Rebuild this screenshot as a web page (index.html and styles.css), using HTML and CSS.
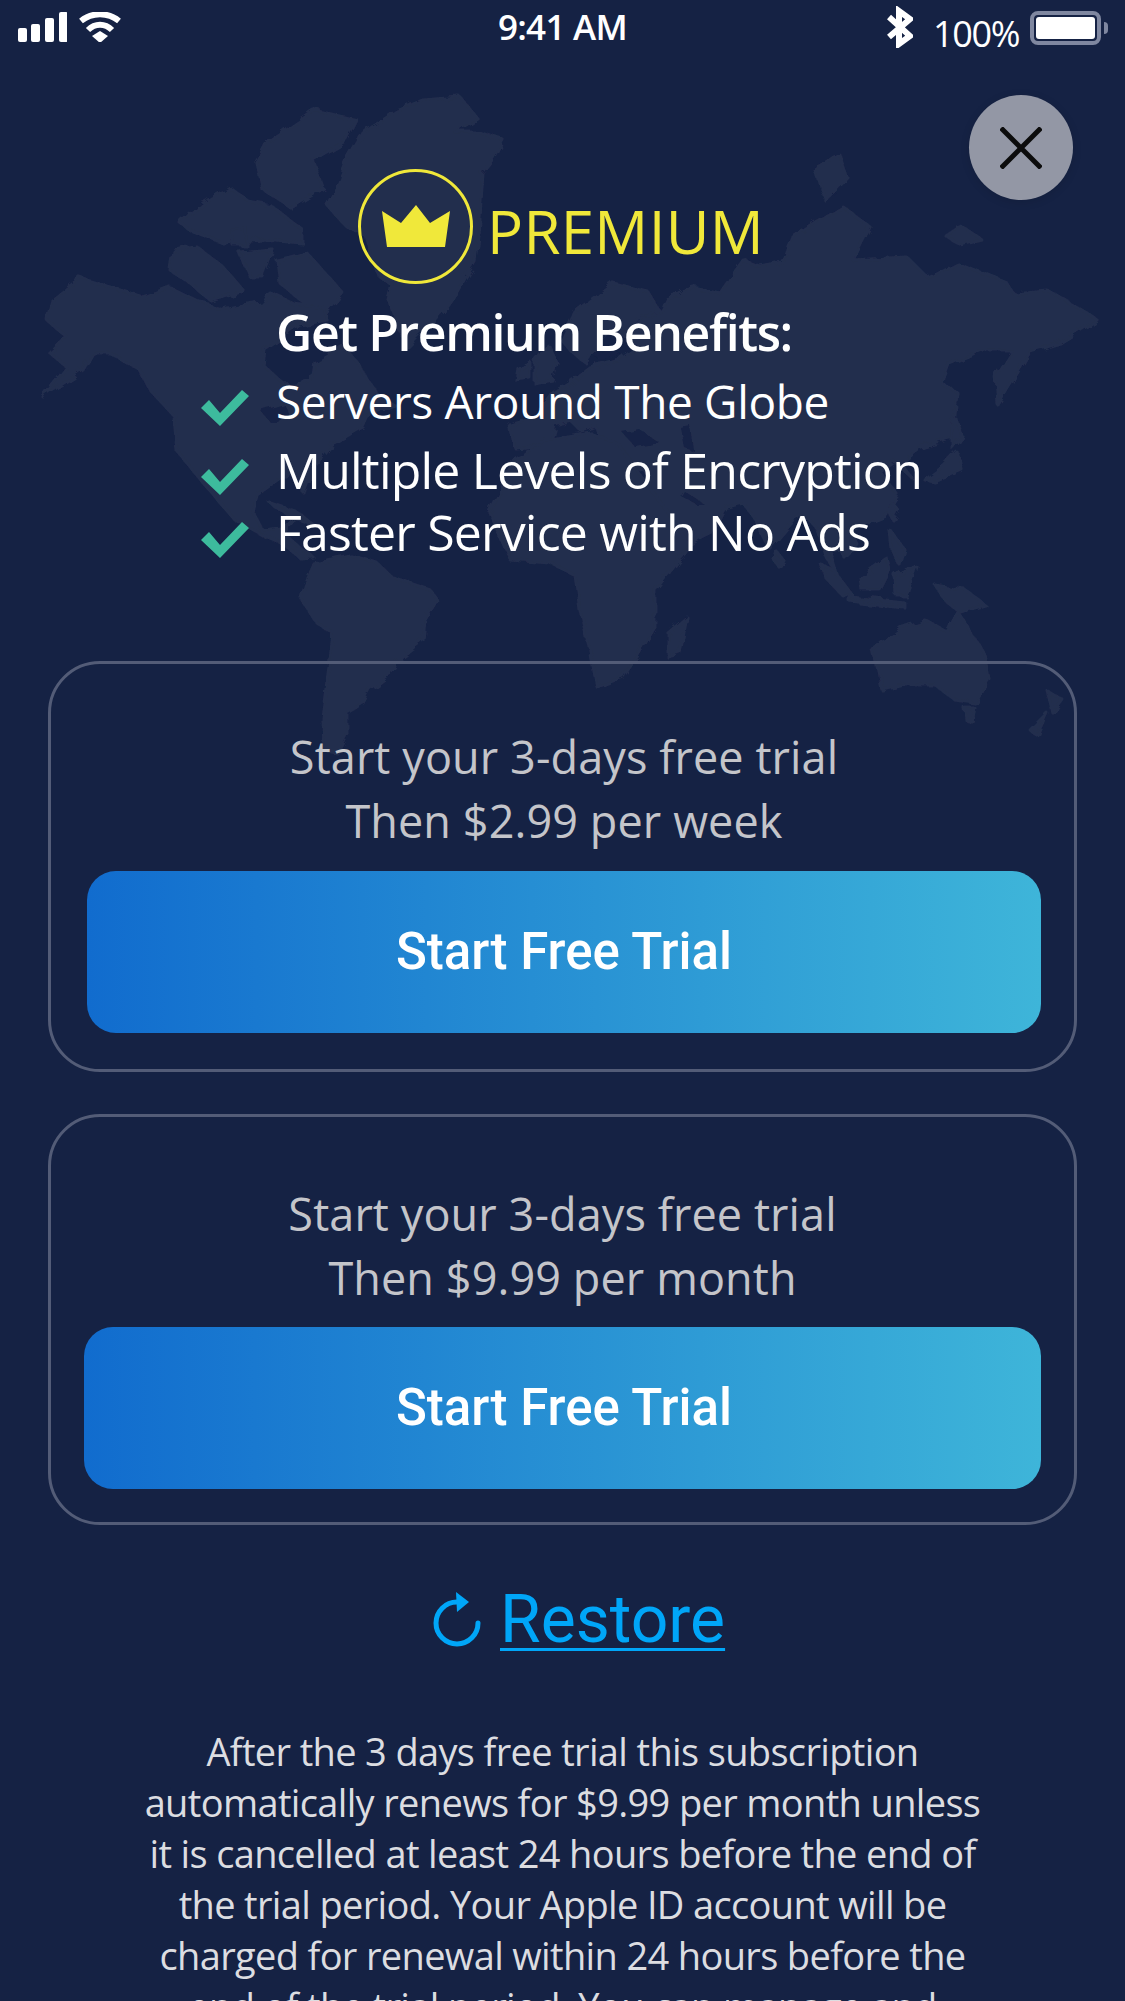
FILE: index.html
```html
<!DOCTYPE html>
<html lang="en">
  <head>
    <meta charset="UTF-8" />
    <meta name="viewport" content="width=device-width, initial-scale=1.0" />
    <title>Premium</title>
    <link rel="stylesheet" href="styles.css">
  </head>
  <body>
    <!-- world map behind everything -->
    <svg class="world-map" viewBox="0 0 1125 800" width="1125" height="800">
      <defs>
        <!-- roughens the straight polygon edges into a coastline -->
        <filter id="coast" x="-2%" y="-2%" width="104%" height="104%">
          <feTurbulence type="fractalNoise" baseFrequency="0.07" numOctaves="3" seed="4" />
          <feDisplacementMap in="SourceGraphic" scale="9" />
        </filter>
      </defs>
      <g filter="url(#coast)">
        <g class="land">
          <!-- greenland and arctic islands -->
          <path d="M363 133L395 112L423 100L460 97L477 118L455 132L478 132L503 140L492 160L482 172L480 200L478 235L475 262L458 290L445 308L425 330L407 348L395 320L388 300L392 285L378 275L365 235L345 225L327 205L338 185L347 160Z" />
          <path d="M270 140L313 110L357 120L347 140L313 160L323 187L290 207L263 190L257 163Z" />
          <path d="M180 223L203 203L230 187L247 200L270 205L303 230L303 243L263 240L223 243L190 230Z" />
          <path d="M173 250L197 247L223 267L243 290L210 300L190 283L170 270Z" />
          <path d="M277 260L307 253L343 293L323 317L297 297L280 283Z" />
          <path d="M240 253L273 250L263 277L250 277Z" />
          <path d="M232 230L246 228L246 246L234 246Z" />
          <!-- north and central america -->
          <path d="M52 300L80 278L143 297L170 287L203 303L223 310L260 303L270 293L293 303L323 307L327 320L300 325L265 350L263 365L285 385L312 382L315 362L345 345L365 375L378 395L395 405L370 412L363 427L345 437L330 445L318 462L308 478L303 492L297 475L280 478L257 495L253 513L262 530L280 528L293 520L285 535L300 548L313 557L300 558L285 545L262 535L235 520L205 485L178 452L175 417L150 390L140 370L110 353L93 353L83 370L43 397L67 367L50 353L67 337L47 320Z" />
          <path d="M270 503L295 511L312 523L290 516Z" />
          <!-- south america -->
          <path d="M313 563L350 555L377 563L392 577L430 590L437 600L425 620L423 640L397 660L387 677L370 690L363 703L347 713L347 733L337 753L323 750L322 717L330 660L333 633L317 623L300 597L307 577Z" />
          <!-- europe and asia -->
          <path d="M510 425L535 418L552 395L575 380L590 368L620 360L640 345L625 338L645 318L660 315L667 300L693 287L720 293L743 260L760 267L783 263L793 237L843 207L870 227L853 260L907 257L927 277L957 263L1007 283L1013 293L1047 290L1087 313L1097 320L1060 343L1030 352L1018 372L998 405L996 375L1012 350L985 350L950 365L943 385L957 392L955 415L952 437L920 447L900 462L912 478L895 462L880 472L898 495L885 515L860 525L850 530L858 545L845 558L838 548L830 550L838 575L825 555L818 530L810 520L800 515L790 525L770 548L755 520L745 505L725 510L715 530L680 548L672 540L650 500L650 480L645 470L625 465L620 448L600 447L595 425L580 430L570 420L555 425L550 445L515 448Z" />
          <path d="M562 340L575 312L613 283L648 292L660 312L640 318L625 335L610 330L595 345L585 362L570 350Z" />
          <path d="M535 362L548 345L556 362L552 380L535 384Z" />
          <path d="M518 368L530 362L530 378L516 380Z" />
          <!-- africa and madagascar -->
          <path d="M490 513L515 460L545 440L590 432L620 445L640 475L670 515L690 547L655 590L655 627L637 657L623 677L597 687L590 650L580 610L575 575L550 563L510 560Z" />
          <path d="M687 617L680 653L668 657L668 633Z" />
          <!-- north sea islands -->
          <path d="M815 170L840 155L848 178L825 200Z" />
          <path d="M945 235L960 225L982 240L960 245Z" />
          <!-- south east asia, japan -->
          <path d="M957 420L962 436L952 448L952 430Z" />
          <path d="M957 452L962 470L935 482L925 480L945 465Z" />
          <path d="M892 503L898 510L893 520L889 512Z" />
          <path d="M777 552L783 560L778 566L774 560Z" />
          <path d="M820 563L835 572L852 595L842 595L826 578Z" />
          <path d="M860 577L887 558L890 570L880 590L862 590Z" />
          <path d="M890 530L905 550L900 565L892 550Z" />
          <path d="M895 575L915 565L905 595L896 595Z" />
          <path d="M850 597L905 603L905 608L850 602Z" />
          <path d="M935 585L965 590L985 605L960 612L945 600Z" />
          <!-- australia, new zealand -->
          <path d="M873 650L900 628L925 620L947 632L958 612L985 655L990 680L975 703L955 700L935 685L905 685L882 690L878 670Z" />
          <path d="M965 708L975 708L972 722L966 720Z" />
          <path d="M1047 690L1063 700L1053 713Z" />
          <path d="M1047 713L1030 730L1037 735Z" />
        </g>
        <g class="water">
          <path d="M623 433L640 430L660 443L635 447Z" />
          <path d="M680 427L690 425L693 450L684 447Z" />
          <path d="M590 353L612 350L622 355L600 360Z" />
          <path d="M262 412L285 405L292 418L270 422Z" />
          <path d="M683 490L703 503L695 503L680 495Z" />
        </g>
      </g>
    </svg>

    <div class="status-bar">
      <div class="status-left">
        <svg class="signal" viewBox="0 0 49 30" width="49" height="30">
          <rect x="0" y="16" width="9" height="14" rx="2" />
          <rect x="13" y="12" width="9" height="18" rx="2" />
          <rect x="27" y="6" width="9" height="24" rx="2" />
          <rect x="41" y="0" width="9" height="30" rx="2" />
        </svg>
        <svg class="wifi" viewBox="0 0 42 30" width="42" height="30">
          <path d="M2 9C13 0 29 0 40 9" />
          <path d="M9 18C16 11 26 11 33 18" />
          <polygon class="wifi-dot" points="13,24 21,19 29,24 21,31" />
        </svg>
      </div>
      <div class="status-time">9:41 AM</div>
      <div class="status-right">
        <svg class="bluetooth" viewBox="0 0 26 42" width="26" height="42">
          <path d="M2 11L23 30L12 38V5L23 13L2 31" />
        </svg>
        <span class="battery-text">100%</span>
        <div class="battery"><div class="battery-fill"></div></div>
        <div class="battery-nub"></div>
      </div>
    </div>

    <button class="btn-close">
      <svg viewBox="0 0 42 42" width="42" height="42">
        <path d="M1 1L41 41M41 1L1 41" />
      </svg>
    </button>

    <div class="brand">
      <div class="brand-icon">
        <svg viewBox="0 0 68 42" width="68" height="42">
          <polygon points="0,6 19,18 34,0 48,18 68,6 63,42 5,42" />
        </svg>
      </div>
      <div class="brand-name">PREMIUM</div>
    </div>

    <div class="benefits-title">Get Premium Benefits:</div>
    <div class="benefit benefit-1">
      <svg class="check" viewBox="0 0 48 36" width="48" height="36"><polygon points="0,18 8,10 19,23 41,0 48,6 19,36" /></svg>
      <span>Servers Around The Globe</span>
    </div>
    <div class="benefit benefit-2">
      <svg class="check" viewBox="0 0 48 36" width="48" height="36"><polygon points="0,18 8,10 19,23 41,0 48,6 19,36" /></svg>
      <span>Multiple Levels of Encryption</span>
    </div>
    <div class="benefit benefit-3">
      <svg class="check" viewBox="0 0 48 36" width="48" height="36"><polygon points="0,18 8,10 19,23 41,0 48,6 19,36" /></svg>
      <span>Faster Service with No Ads</span>
    </div>

    <div class="card card-week">
      <div class="card-text">Start your 3-days free trial<br>Then $2.99 per week</div>
      <a href="#" class="btn-trial">Start Free Trial</a>
    </div>

    <div class="card card-month">
      <div class="card-text">Start your 3-days free trial<br>Then $9.99 per month</div>
      <a href="#" class="btn-trial">Start Free Trial</a>
    </div>

    <div class="restore">
      <svg viewBox="0 0 48 58" width="48" height="58">
        <path class="restore-arc" d="M24 11A21 21 0 1 0 45 32" />
        <polygon points="23,1 36,11 24,21" />
      </svg>
      <a href="#" class="restore-link">Restore</a>
    </div>

    <div class="legal">
      After the 3 days free trial this subscription<br>
      automatically renews for $9.99 per month unless<br>
      it is cancelled at least 24 hours before the end of<br>
      the trial period. Your Apple ID account will be<br>
      charged for renewal within 24 hours before the<br>
      end of the trial period. You can manage and
    </div>
  </body>
</html>
```

FILE: styles.css
```css
html {
  overflow: hidden;
}

body {
  position: relative;
  width: 1125px;
  height: 2001px;
  margin: 0;
  overflow: hidden;
  background-color: #152244;
  color: #ffffff;
  font-family: "Open Sans", "Noto Sans", sans-serif;
}

.world-map {
  position: absolute;
  top: 0;
  left: 0;
}

.land {
  fill: #242e4d;
  stroke: #242e4d;
  stroke-width: 3;
  stroke-linejoin: round;
}

.water {
  fill: #152244;
}

/* status bar */
.status-bar {
  position: relative;
  display: grid;
  grid-template-columns: 1fr auto 1fr;
  height: 56px;
}

.status-left {
  display: flex;
  gap: 12px;
  padding: 12px 0 0 18px;
  align-items: flex-start;
}

.signal {
  fill: #ffffff;
}

.wifi {
  fill: none;
  stroke: #ffffff;
  stroke-width: 6;
}

.wifi-dot {
  fill: #ffffff;
  stroke: none;
}

.status-time {
  padding-top: 4px;
  font-size: 35px;
  font-weight: 600;
  line-height: 46px;
  letter-spacing: -0.7px;
}

.status-right {
  display: flex;
  justify-content: flex-end;
  align-items: flex-start;
  padding-right: 17px;
}

.bluetooth {
  margin-top: 6px;
  fill: none;
  stroke: #ffffff;
  stroke-width: 6;
}

.battery-text {
  margin: 9px 0 0 20px;
  font-size: 36px;
  line-height: 50px;
  letter-spacing: -1.4px;
}

.battery {
  box-sizing: border-box;
  width: 71px;
  height: 34px;
  margin: 11px 0 0 11px;
  padding: 2px;
  border: 4px solid #7f87a0;
  border-radius: 8px;
}

.battery-fill {
  height: 100%;
  border-radius: 3px;
  background-color: #ffffff;
}

.battery-nub {
  width: 4px;
  height: 12px;
  margin: 22px 0 0 3px;
  border-radius: 0 4px 4px 0;
  background-color: #7f87a0;
}

.btn-close {
  position: absolute;
  top: 95px;
  right: 52px;
  display: flex;
  align-items: center;
  justify-content: center;
  width: 104px;
  height: 105px;
  padding: 0;
  border: none;
  border-radius: 50%;
  background-color: #9397a5;
  box-shadow: 0 2px 10px rgba(0, 0, 0, 0.12);
}

.btn-close path {
  fill: none;
  stroke: #0c0c0c;
  stroke-width: 5;
}

/* premium header */
.brand {
  position: relative;
  display: flex;
  align-items: center;
  gap: 14px;
  margin: 113px 0 0 358px;
}

.brand-icon {
  box-sizing: border-box;
  display: flex;
  align-items: center;
  justify-content: center;
  width: 115px;
  height: 115px;
  padding-bottom: 2px;
  border: 3px solid #f0e83a;
  border-radius: 50%;
}

.brand-icon polygon {
  fill: #f0e83a;
}

.brand-name {
  padding-top: 8px;
  color: #f0e83a;
  font-size: 60px;
  letter-spacing: 0.3px;
}

.benefits-title {
  position: relative;
  margin: 18px 0 0 276px;
  font-size: 50px;
  font-weight: 600;
  line-height: 60px;
  letter-spacing: -1.4px;
}

.benefit {
  position: relative;
  display: flex;
  gap: 27px;
  height: 60px;
  margin-left: 201px;
  font-size: 50px;
  line-height: 60px;
  letter-spacing: -0.8px;
}

.benefit-1 {
  margin-top: 9px;
  font-size: 46px;
  letter-spacing: -0.35px;
}

.benefit-2 {
  margin-top: 9px;
}

.benefit-3 {
  margin-top: 2px;
}

.check {
  flex: none;
  margin-top: 19px;
  fill: #3dbb9d;
}

.benefit-3 .check {
  margin-top: 20px;
}

/* plan cards */
.card {
  position: relative;
  box-sizing: border-box;
  width: 1029px;
  height: 411px;
  margin-left: 48px;
  padding: 61px 33px 0 36px;
  border: 3px solid #535c77;
  border-radius: 52px;
}

.card-week {
  margin-top: 99px;
}

.card-month {
  margin-top: 42px;
  padding: 65px 33px 0 33px;
}

.card-text {
  color: #c4c5ca;
  font-size: 45px;
  line-height: 64px;
  text-align: center;
  letter-spacing: 0.1px;
}

.btn-trial {
  display: block;
  height: 162px;
  margin-top: 18px;
  border-radius: 29px;
  background: linear-gradient(90deg, #116cce, #3eb5d9);
  color: #ffffff;
  font-family: "Roboto", sans-serif;
  font-size: 51px;
  font-weight: 500;
  line-height: 162px;
  text-align: center;
  text-decoration: none;
}

.card-month .btn-trial {
  margin-top: 17px;
  padding-left: 3px;
}

.restore {
  position: relative;
  display: flex;
  align-items: flex-start;
  gap: 19px;
  margin: 57px 0 0 433px;
}

.restore svg {
  margin-top: 9px;
  fill: #00a6f8;
}

.restore .restore-arc {
  fill: none;
  stroke: #00a6f8;
  stroke-width: 5;
  stroke-linecap: round;
}

.restore-link {
  color: #00a6f8;
  font-family: "Roboto", sans-serif;
  font-size: 66px;
  line-height: 76px;
  text-decoration: underline;
  text-decoration-thickness: 3px;
  text-underline-offset: 6px;
}

.legal {
  position: relative;
  margin-top: 68px;
  color: #dcdde1;
  font-size: 38px;
  line-height: 51px;
  text-align: center;
  letter-spacing: -0.65px;
}
```
